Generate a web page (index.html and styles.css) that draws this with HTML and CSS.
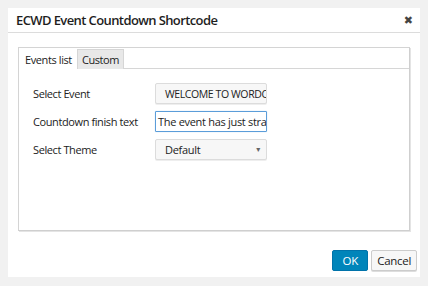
FILE: index.html
```html
<!DOCTYPE html>
<html lang="en">
<head>
    <meta charset="UTF-8">
    <title>ECWD Event Countdown Shortcode</title>
    <link rel="stylesheet" href="styles.css">
</head>
<body>
<div class="dialog">
    <div class="dialog-header">
        <span class="dialog-title">ECWD Event Countdown Shortcode</span>
        <span class="dialog-close">&#10006;</span>
    </div>
    <div class="dialog-body">
        <div class="panel">
            <div class="tabs">
                <div class="tab active">Events list</div>
                <div class="tab">Custom</div>
                <div class="tab-fill"></div>
            </div>
            <div class="form">
                <div class="form-row">
                    <label>Select Event</label>
                    <div class="select-box event-select"><span>WELCOME TO WORDC</span></div>
                </div>
                <div class="form-row">
                    <label>Countdown finish text</label>
                    <div class="text-input">The event has just stra</div>
                </div>
                <div class="form-row">
                    <label>Select Theme</label>
                    <div class="select-box theme-select"><span>Default</span><span class="arrow">&#9662;</span></div>
                </div>
            </div>
        </div>
    </div>
    <div class="dialog-footer">
        <button class="btn btn-primary">OK</button>
        <button class="btn">Cancel</button>
    </div>
</div>
</body>
</html>
```

FILE: styles.css
```css
/* General styles */
body {
    margin: 0;
    padding: 8px 8px 0 8px;
    background-color: #f1f1f1;
    font-family: 'Open Sans', sans-serif;
    color: #222;
}

.dialog {
    width: 412px;
    height: 269px;
    background-color: #fff;
    display: flex;
    flex-direction: column;
}

/* Header */
.dialog-header {
    height: 24px;
    border-bottom: 1px solid #dcdcdc;
    display: flex;
    align-items: center;
    justify-content: space-between;
    padding: 0 7px 0 8px;
}

.dialog-title {
    font-size: 13px;
    font-weight: 600;
    letter-spacing: -0.6px;
    color: #1e1e1e;
}

.dialog-close {
    font-size: 11px;
    color: #444;
    font-family: 'DejaVu Sans', sans-serif;
}

/* Body */
.dialog-body {
    padding: 14px 10px 0 10px;
}

.panel {
    height: 182px;
    border: 1px solid #d4d4d4;
    border-right-color: #cfcfcf;
    border-bottom-color: #cfcfcf;
    box-shadow: 1px 1px 0 #e4e4e4;
    display: flex;
    flex-direction: column;
}

.tabs {
    display: flex;
    height: 21px;
    padding-left: 1px;
    padding-top: 1px;
    box-sizing: border-box;
}

.tab {
    font-size: 11px;
    letter-spacing: -0.4px;
    padding: 0 4px;
    line-height: 20px;
    border: 1px solid #d6d6d6;
    border-bottom: none;
    background-color: #e8e8e8;
    color: #222;
}

.tab.active {
    background-color: #fff;
    border-color: #fff;
}

.tab-fill {
    flex: 1;
    border-bottom: 1px solid #d6d6d6;
}

.form {
    padding: 14px 0 0 14px;
    display: flex;
    flex-direction: column;
    gap: 7px;
}

.form-row {
    display: flex;
    align-items: center;
    height: 21px;
}

.form-row label {
    width: 122px;
    font-size: 11px;
    letter-spacing: -0.4px;
    white-space: nowrap;
    color: #222;
}

.select-box,
.text-input {
    width: 112px;
    height: 21px;
    box-sizing: border-box;
    font-size: 11px;
    letter-spacing: -0.3px;
    display: flex;
    align-items: center;
    overflow: hidden;
    white-space: nowrap;
}

.select-box {
    background-color: #f7f7f7;
    border: 1px solid #dcdcdc;
    border-radius: 2px;
    box-shadow: 0 1px 0 #eee;
    padding: 0 6px 0 9px;
    color: #222;
}

.event-select {
    font-size: 10.5px;
    letter-spacing: -0.4px;
}

.theme-select {
    justify-content: space-between;
}

.theme-select .arrow {
    font-size: 8px;
    color: #666;
    font-family: 'DejaVu Sans', sans-serif;
}

.text-input {
    border: 1px solid #5b9dd9;
    border-radius: 1px;
    padding: 0 2px;
    background-color: #fff;
    color: #222;
    box-shadow: 0 0 1px #9cc4e8;
}

/* Footer */
.dialog-footer {
    margin-top: auto;
    display: flex;
    justify-content: flex-end;
    gap: 3px;
    padding: 0 3px 6px 0;
}

.btn {
    height: 21px;
    padding: 0 5px;
    font-family: 'Open Sans', sans-serif;
    font-size: 11.5px;
    letter-spacing: -0.3px;
    border: 1px solid #ccc;
    border-radius: 2px;
    background-color: #f7f7f7;
    color: #222;
    box-shadow: 0 1px 0 #ddd;
}

.btn-primary {
    width: 36px;
    background-color: #0085ba;
    border-color: #0073aa;
    color: #fff;
    box-shadow: none;
}
```
